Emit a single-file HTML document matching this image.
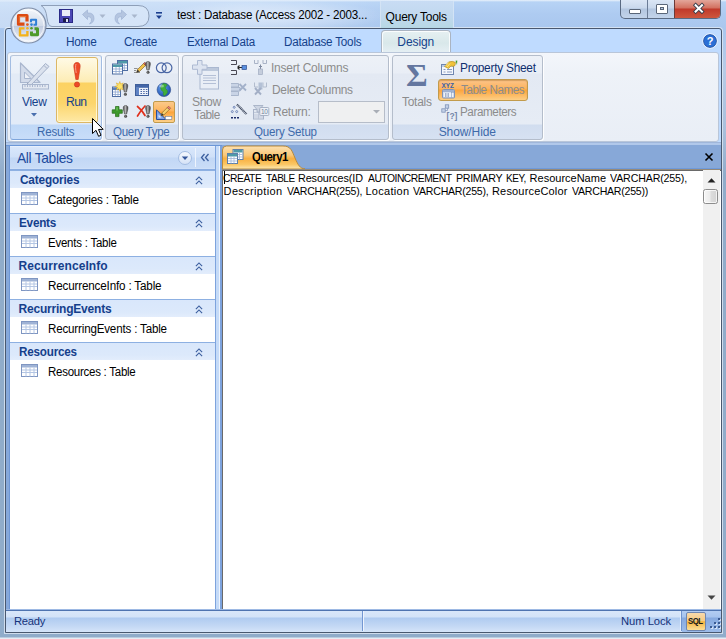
<!DOCTYPE html>
<html>
<head>
<meta charset="utf-8">
<title>test : Database (Access 2002 - 2003 file format) - Microsoft Access</title>
<style>
*{box-sizing:border-box;margin:0;padding:0}
html,body{width:726px;height:639px;overflow:hidden;background:#c3d6ee}
body{font-family:"Liberation Sans",sans-serif;font-size:12px;color:#15428b;position:relative}
.a{position:absolute}
.t{position:absolute;white-space:nowrap;line-height:14px}
#frame{left:0;top:0;width:726px;height:639px;background:linear-gradient(180deg,#eaf2fb 0,#b7d3f5 2px,#aecbf1 14px,#a9c7ee 29px,#b7cbe6 70px,#a9c0dc 130px,#90acca 175px,#90acca 637px,#e6ecf4 638px)}
#inner{left:5px;top:28px;width:717px;height:605px;background:#bfdbff;border:1px solid #49586f;border-radius:3px 3px 0 0;box-shadow:0 0 0 1px rgba(222,232,244,.8)}
/* ribbon */
#ribbon{left:7px;top:52px;width:712px;height:90px;border:1px solid #b9c6d9;border-radius:3px;background:linear-gradient(180deg,#f3f6fb 0,#eef2f8 20px,#e9eef6 100%)}
.grp{position:absolute;top:55px;height:85px;border:1px solid #b4bdcb;border-radius:3px;background:linear-gradient(180deg,#edf1f7 0,#e9eef6 17px,#e3e9f3 18px,#e6ecf5 68px,#d1ddef 69px,#d6e1f2 100%);box-shadow:1px 1px 0 rgba(255,255,255,.9)}
.grp .lbl{position:absolute;left:0;right:0;bottom:0;height:15px;text-align:center;color:#3e6aaa;font-size:12px;line-height:14px}
.tab{position:absolute;top:35px;font-size:12px;color:#15428b;line-height:14px;white-space:nowrap}
/* nav */
#nav{left:9px;top:146px;width:206px;height:463px;background:#fff;border-left:1px solid #6f97d6}
.nh{position:absolute;left:0;width:205px;height:18px;border-top:1px solid #8db0e2;background:linear-gradient(180deg,#d9e7fb 0,#dce9fb 12px,#e3edfc 100%);font-weight:bold;color:#153f8c}
.nh span{position:absolute;left:9px;top:1px;font-size:12px;line-height:14px;white-space:nowrap}
.dl{color:#000;font-size:11px;line-height:13px}
.ni{position:absolute;left:38px;color:#000;font-size:12px;white-space:nowrap}
/* doc */
#doc{left:222px;top:145px;width:499px;height:464px;background:#fff}
#status{left:6px;top:611px;width:715px;height:21px;background:linear-gradient(180deg,#d9e7fa 0,#d3e3f8 6px,#afcbf0 7px,#c3d8f4 15px,#d5e4f9 100%)}
</style>
<style id="fit">
#ttl{letter-spacing:-0.19px;margin-left:1.3px;margin-top:-0.5px;transform:scaleX(0.966);transform-origin:0 50%}
#qt{letter-spacing:-0.24px;margin-left:-1.4px;margin-top:0.5px;transform:scaleX(1.000);transform-origin:0 50%}
#tb1{letter-spacing:-0.27px;margin-left:-0.5px;margin-top:0.2px;transform:scaleX(0.985);transform-origin:0 50%}
#tb2{letter-spacing:-0.33px;margin-left:-0.3px;margin-top:0.2px;transform:scaleX(0.966);transform-origin:0 50%}
#tb3{letter-spacing:-0.16px;margin-left:-0.1px;margin-top:0.2px;transform:scaleX(0.965);transform-origin:0 50%}
#tb4{letter-spacing:-0.21px;margin-left:-0.1px;margin-top:0.2px;transform:scaleX(0.973);transform-origin:0 50%}
#tb5{letter-spacing:-0.08px;margin-left:-0.7px;margin-top:0.2px;transform:scaleX(1.000);transform-origin:0 50%}
#vw{letter-spacing:-0.28px;margin-left:0.4px;margin-top:0.1px;transform:scaleX(0.955);transform-origin:0 50%}
#rn{letter-spacing:-0.62px;margin-left:0.0px;margin-top:0.1px;transform:scaleX(0.973);transform-origin:0 50%}
#lb1{letter-spacing:-0.17px;margin-left:1.0px;margin-top:1.0px;transform:scaleX(0.961);transform-origin:0 50%}
#lb2{letter-spacing:-0.32px;margin-left:0.6px;margin-top:1.0px;transform:scaleX(0.963);transform-origin:0 50%}
#lb3{letter-spacing:-0.19px;margin-left:1.3px;margin-top:1.0px;transform:scaleX(0.963);transform-origin:0 50%}
#lb4{letter-spacing:-0.08px;margin-left:-0.4px;margin-top:1.0px;transform:scaleX(1.000);transform-origin:0 50%}
#sh1{letter-spacing:-0.41px;margin-left:-0.2px;margin-top:0.0px;transform:scaleX(0.973);transform-origin:0 50%}
#sh2{letter-spacing:-0.53px;margin-left:1.7px;margin-top:-0.2px;transform:scaleX(0.947);transform-origin:0 50%}
#ic{letter-spacing:-0.24px;margin-left:-0.6px;margin-top:0.0px;transform:scaleX(0.957);transform-origin:0 50%}
#dc{letter-spacing:-0.29px;margin-left:-0.4px;margin-top:0.0px;transform:scaleX(0.952);transform-origin:0 50%}
#rt{letter-spacing:-0.28px;margin-left:-0.2px;margin-top:0.0px;transform:scaleX(0.963);transform-origin:0 50%}
#tt{letter-spacing:-0.29px;margin-left:0.5px;margin-top:0.0px;transform:scaleX(0.957);transform-origin:0 50%}
#ps{letter-spacing:-0.27px;margin-left:-0.5px;margin-top:0.1px;transform:scaleX(0.952);transform-origin:0 50%}
#tn{letter-spacing:-0.47px;margin-left:0.5px;margin-top:0.0px;transform:scaleX(0.931);transform-origin:0 50%}
#pm{letter-spacing:-0.45px;margin-left:-0.5px;margin-top:0.0px;transform:scaleX(0.935);transform-origin:0 50%}
#at{letter-spacing:-0.33px;margin-left:1.5px;margin-top:-0.2px;transform:scaleX(0.950);transform-origin:0 50%}
#g0{letter-spacing:-0.16px;margin-left:0.5px;margin-top:0.5px;transform:scaleX(0.982);transform-origin:0 50%}
#g1{letter-spacing:-0.25px;margin-left:-0.5px;margin-top:0.5px;transform:scaleX(0.979);transform-origin:0 50%}
#g2{letter-spacing:0.09px;margin-left:-0.5px;margin-top:0.5px;transform:scaleX(1.000);transform-origin:0 50%}
#g3{letter-spacing:-0.21px;margin-left:-0.5px;margin-top:0.5px;transform:scaleX(1.000);transform-origin:0 50%}
#g4{letter-spacing:-0.21px;margin-left:-0.5px;margin-top:0.5px;transform:scaleX(0.972);transform-origin:0 50%}
#n0{letter-spacing:-0.18px;margin-left:-0.1px;margin-top:-4.4px;transform:scaleX(0.973);transform-origin:0 50%}
#n1{letter-spacing:-0.23px;margin-left:-0.1px;margin-top:-4.4px;transform:scaleX(0.956);transform-origin:0 50%}
#n2{letter-spacing:-0.18px;margin-left:-0.1px;margin-top:-4.4px;transform:scaleX(0.973);transform-origin:0 50%}
#n3{letter-spacing:-0.18px;margin-left:-0.1px;margin-top:-4.4px;transform:scaleX(0.966);transform-origin:0 50%}
#n4{letter-spacing:-0.27px;margin-left:-0.1px;margin-top:-4.4px;transform:scaleX(0.959);transform-origin:0 50%}
#q1{letter-spacing:-0.67px;margin-left:0.5px;margin-top:0.0px;transform:scaleX(0.954);transform-origin:0 50%}
#a0{letter-spacing:-0.47px;margin-left:-0.6px;margin-top:0.6px;transform:scaleX(0.937);transform-origin:0 50%}
#a1{letter-spacing:-0.49px;margin-left:42.3px;margin-top:0.6px;transform:scaleX(0.909);transform-origin:0 50%}
#a2{letter-spacing:-0.09px;margin-left:74.3px;margin-top:0.6px;transform:scaleX(0.981);transform-origin:0 50%}
#a3{letter-spacing:-0.52px;margin-left:143.8px;margin-top:0.6px;transform:scaleX(0.938);transform-origin:0 50%}
#a4{letter-spacing:-0.34px;margin-left:231.5px;margin-top:0.6px;transform:scaleX(0.974);transform-origin:0 50%}
#a5{letter-spacing:-0.51px;margin-left:282.0px;margin-top:0.6px;transform:scaleX(0.912);transform-origin:0 50%}
#a6{letter-spacing:0.00px;margin-left:305.6px;margin-top:0.6px;transform:scaleX(1.000);transform-origin:0 50%}
#a7{letter-spacing:-0.17px;margin-left:385.7px;margin-top:0.6px;transform:scaleX(0.969);transform-origin:0 50%}
#b0{letter-spacing:0.34px;margin-left:-0.4px;margin-top:0.6px;transform:scaleX(1.000);transform-origin:0 50%}
#b1{letter-spacing:-0.24px;margin-left:63.1px;margin-top:0.6px;transform:scaleX(0.956);transform-origin:0 50%}
#b2{letter-spacing:0.29px;margin-left:141.4px;margin-top:0.6px;transform:scaleX(1.000);transform-origin:0 50%}
#b3{letter-spacing:-0.24px;margin-left:189.4px;margin-top:0.6px;transform:scaleX(0.960);transform-origin:0 50%}
#b4{letter-spacing:0.17px;margin-left:268.0px;margin-top:0.6px;transform:scaleX(1.000);transform-origin:0 50%}
#b5{letter-spacing:-0.26px;margin-left:347.7px;margin-top:0.6px;transform:scaleX(0.963);transform-origin:0 50%}
#sq{letter-spacing:-0.54px;margin-left:-1.0px;margin-top:0.3px;transform:scaleX(0.919);transform-origin:0 50%}
#rd{letter-spacing:-0.26px;margin-left:-0.5px;margin-top:-0.2px;transform:scaleX(0.976);transform-origin:0 50%}
#nl{letter-spacing:-0.06px;margin-left:-0.3px;margin-top:-0.2px;transform:scaleX(0.978);transform-origin:0 50%}
</style>
</head>
<body>
<div id="frame" class="a"></div>
<div id="inner" class="a"></div>

<!-- ===== title bar ===== -->
<div class="a" style="left:0;top:1px;width:400px;height:27px;background:linear-gradient(90deg,rgba(255,255,255,.35) 0,rgba(255,255,255,.28) 60%,rgba(255,255,255,0) 100%)"></div>
<div class="a" style="left:160px;top:1px;width:225px;height:27px;background:radial-gradient(ellipse at 50% 55%,rgba(255,255,255,.45) 0,rgba(255,255,255,.2) 45%,rgba(255,255,255,0) 72%)"></div>
<div class="a" id="ctx" style="left:380px;top:1px;width:74px;height:27px;background:linear-gradient(180deg,#c8dcf4 0,#c0d8ee 60%,#b7d8e4 100%);border-left:1px solid #d3e3f5;border-right:1px solid #d3e3f5"></div>
<div class="t" style="left:176px;top:8px;color:#000;font-size:12px" id="ttl">test : Database (Access 2002 - 2003...</div>
<div class="t" style="left:387px;top:9px;color:#000;font-size:12px" id="qt">Query Tools</div>
<!-- QAT pill -->
<svg class="a" style="left:40px;top:3px" width="125" height="26" viewBox="0 0 125 26">
 <path d="M3 2.5 H98 Q109 2.5 109 13 Q109 23.5 98 23.5 H12 Q8 23.5 7 15 Q6 5 1 2.5Z" fill="rgba(225,236,250,.55)" stroke="#8e9fb8" stroke-width="1"/>
 <!-- save -->
 <rect x="19.5" y="6.5" width="13" height="13" fill="#4b47b5" stroke="#2a2a86"/>
 <rect x="22" y="7" width="8" height="6" fill="#e9ecf7"/>
 <rect x="23" y="15" width="6" height="4" fill="#1c1c4a"/>
 <rect x="26" y="16" width="2" height="3" fill="#dfe3f2"/>
 <!-- undo -->
 <path d="M42.500 11.500 l5 -4.500 v3 q6.500 -.5 6.500 5.500 q0 4 -4.500 5.500 q2.500 -2.500 2 -5 q-.5 -2.500 -4 -2.500 v3z" fill="#b4c5e0" stroke="#9fb3d4" stroke-width=".7"/>
 <path d="M59.500 11.500 h6 l-3 3.500z" fill="#a9b7cd"/>
 <!-- redo -->
 <path d="M86.500 11.500 l-5 -4.500 v3 q-6.500 -.5 -6.500 5.500 q0 4 4.500 5.500 q-2.500 -2.500 -2 -5 q.5 -2.500 4 -2.500 v3z" fill="#b4c5e0" stroke="#9fb3d4" stroke-width=".7"/>
 <path d="M91.500 11.500 h6 l-3 3.500z" fill="#a9b7cd"/>
 <!-- customise -->
 <rect x="116" y="9" width="6" height="1.6" fill="#1c3f8f"/>
 <path d="M116 12.5 h6 l-3 3.5z" fill="#1c3f8f"/>
</svg>
<!-- window buttons -->
<div class="a" style="left:620px;top:0;width:101px;height:19px;border:1px solid #5a6a82;border-top:0;border-radius:0 0 5px 5px;overflow:hidden;background:linear-gradient(180deg,#dbe6f5 0,#c9d8ec 8px,#b3c6e0 9px,#c3d4ea 100%)">
 <div class="a" style="left:26px;top:0;width:1px;height:19px;background:#6b7c96"></div>
 <div class="a" style="left:53px;top:0;width:47px;height:19px;border-left:1px solid #6b3a38;background:linear-gradient(180deg,#e3a69a 0,#d2705f 8px,#c0392a 9px,#cf5a3f 100%)"></div>
 <div class="a" style="left:8px;top:9px;width:12px;height:5px;background:#fff;border:1px solid #5a6678;border-radius:1px"></div>
 <div class="a" style="left:35px;top:4px;width:12px;height:10px;background:#fff;border:1px solid #5a6678;border-radius:1px"><div style="position:absolute;left:3px;top:2px;width:4px;height:3px;background:#b9c9df;border:1px solid #5a6678"></div></div>
 <svg class="a" style="left:70px;top:2px" width="16" height="13" viewBox="0 0 16 13"><path d="M4.600 3.200 L11 9.600 M11 3.200 L4.600 9.600" stroke="#3a3f4c" stroke-width="3.800" stroke-linecap="square"/><path d="M4.600 3.200 L11 9.600 M11 3.200 L4.600 9.600" stroke="#fff" stroke-width="2" stroke-linecap="square"/></svg>
</div>
<!-- office orb -->
<svg class="a" style="left:9px;top:6px" width="40" height="40" viewBox="0 0 40 40">
 <defs>
  <radialGradient id="og" cx="50%" cy="35%" r="65%"><stop offset="0" stop-color="#ffffff"/><stop offset=".6" stop-color="#e4eaf3"/><stop offset="1" stop-color="#aebbd0"/></radialGradient>
  <linearGradient id="ol" x1="0" y1="0" x2="0" y2="1"><stop offset="0" stop-color="#f4f7fb"/><stop offset=".5" stop-color="#d3dcea"/><stop offset=".52" stop-color="#c0cbe0"/><stop offset="1" stop-color="#f2f5fa"/></linearGradient>
 </defs>
 <circle cx="19.5" cy="19.5" r="17.5" fill="url(#ol)" stroke="#7f8ea8" stroke-width="1.2"/>
 <circle cx="19.5" cy="19.5" r="15.5" fill="none" stroke="#fff" stroke-opacity=".7"/>
 <g fill="none" stroke-linejoin="round" stroke-linecap="butt">
  <path d="M18 15.500 V9.700 H9.500 V18.200 H15.500" stroke="#dc4a12" stroke-width="3.200"/>
  <path d="M17.200 10.500 H10.300 V17" stroke="#f08a4a" stroke-width=".9" stroke-opacity=".8"/>
  <path d="M22 16.300 V13.800 H27.100 V18.800 H24.500" stroke="#2f7fd6" stroke-width="2"/>
  <path d="M15.500 22.400 H11 V29.400 H18.400 V25" stroke="#f3b21b" stroke-width="2.400"/>
  <path d="M25.500 22.700 H28.500 V28.700 H22.500 V25.500" stroke="#4e9a2a" stroke-width="3"/>
 </g>
 <circle cx="18.400" cy="18.600" r="1.400" fill="#e85a1c"/><circle cx="22.500" cy="18.600" r="1.300" fill="#2f7fd6"/>
 <circle cx="18.400" cy="22.300" r="1.300" fill="#f3b21b"/><circle cx="22.500" cy="22.300" r="1.300" fill="#4e9a2a"/>
</svg>
<!-- ===== tabs ===== -->
<div class="a" style="left:381px;top:30px;width:70px;height:23px;border:1px solid #aab4c2;border-bottom:0;border-radius:4px 4px 0 0;background:linear-gradient(180deg,#e6f0f2 0,#d9e8ea 55%,#e6eff4 100%);box-shadow:inset 1px 1px 0 rgba(255,255,255,.8),inset -1px 0 0 rgba(255,255,255,.8)"></div>
<div class="tab" style="left:66px" id="tb1">Home</div>
<div class="tab" style="left:124px" id="tb2">Create</div>
<div class="tab" style="left:187px" id="tb3">External Data</div>
<div class="tab" style="left:284px" id="tb4">Database Tools</div>
<div class="tab" style="left:398px" id="tb5">Design</div>
<!-- help -->
<svg class="a" style="left:702px;top:33px" width="16" height="16" viewBox="0 0 16 16">
 <circle cx="8" cy="8" r="6.500" fill="#2a6fd6" stroke="#1b4a9c"/>
 <circle cx="8" cy="8" r="7.300" fill="none" stroke="#fff" stroke-opacity=".8" stroke-width=".8"/>
 <text x="8" y="12" font-size="11" font-weight="bold" text-anchor="middle" fill="#fff" font-family="Liberation Sans, sans-serif">?</text>
</svg>

<div id="ribbon" class="a"></div>
<div class="a" style="left:6px;top:142px;width:715px;height:3px;background:linear-gradient(180deg,#9fb6da 0,#9fb6da 1px,#b1c8ea 1px,#b1c8ea 3px)"></div>
<div class="a" style="left:6px;top:145px;width:216px;height:1px;background:#6b97d8"></div>
<!-- ===== Results group ===== -->
<div class="grp" style="left:10px;width:92px;border-color:#b9c6da #a3bde2 #7fa6dc #a3bde2;background:linear-gradient(180deg,#eef3fa 0,#eaf0f8 17px,#e3ebf6 18px,#e2ebf8 68px,#bfd8f7 69px,#c8ddf9 100%)"><div class="lbl"><span id="lb1" style="display:inline-block;white-space:nowrap">Results</span></div></div>
<svg class="a" style="left:16px;top:58px" width="38" height="36" viewBox="16 58 38 36">
 <path d="M20.500 63 V82.500 H40Z" fill="#d3dbea" stroke="#a9b6ce" stroke-width="1.200" stroke-linejoin="round"/>
 <path d="M24.500 72 V78.500 H31Z" fill="#eef1f7" stroke="#a9b6ce" stroke-width="1"/>
 <path d="M27.500 83.500 L45.500 63.500 L49 66.500 L31 85 L27 85.500Z" fill="#dbe2ee" stroke="#a3b0c8" stroke-width="1"/>
 <path d="M44 65.500 l3 3" stroke="#a3b0c8" stroke-width="1"/>
 <path d="M27 85.500 l.6 -2.200 l1.800 1.700z" fill="#6a768c"/>
 <rect x="22.500" y="84.500" width="26" height="4.500" fill="#e4e9f2" stroke="#a9b6ce"/>
 <path d="M25 85 v2 M27.500 85 v2 M30 85 v2 M32.500 85 v2 M35 85 v2 M37.500 85 v2 M40 85 v2 M42.500 85 v2 M45 85 v2" stroke="#a9b6ce" stroke-width="1"/>
</svg>
<div class="t" style="left:22px;top:95px;font-size:12.500px" id="vw">View</div>
<svg class="a" style="left:31px;top:113px" width="6" height="4"><path d="M0 0 h6 l-3 3.500z" fill="#4a6fae"/></svg>
<div class="a" style="left:56px;top:57px;width:42px;height:66px;border:1px solid #dcb765;border-radius:3px;background:linear-gradient(180deg,#fffae6 0,#fdecb4 24px,#fcd263 25px,#fcd56b 45px,#fee9a6 100%);box-shadow:inset 0 0 0 1px rgba(255,250,225,.8)"></div>
<svg class="a" style="left:71px;top:61px" width="12" height="28" viewBox="0 0 12 28">
 <path d="M6 1.500 C9 1.500 9.500 4 9 7 L7.200 18.500 H4.800 L3 7 C2.500 4 3 1.500 6 1.500Z" fill="#ee4a26" stroke="#c8381c" stroke-width=".6"/>
 <circle cx="6" cy="23.500" r="2.600" fill="#ee4a26" stroke="#c3301c" stroke-width=".6"/>
 <path d="M5 3 C4.300 5 4.500 8 5.200 12" stroke="#f9a08c" stroke-width="1" fill="none"/>
</svg>
<div class="t" style="left:66px;top:95px;font-size:12.500px" id="rn">Run</div>
<!-- ===== Query Type group ===== -->
<div class="grp" style="left:105px;width:74px"><div class="lbl"><span id="lb2" style="display:inline-block;white-space:nowrap">Query Type</span></div></div>
<div class="a" style="left:153px;top:101px;width:22px;height:22px;border:1px solid #c29b4c;border-radius:2px;background:linear-gradient(180deg,#fbc98a 0,#fdb45c 45%,#fca33a 50%,#fdd089 100%)"></div>
<svg class="a" style="left:100px;top:50px" width="90" height="80" viewBox="100 50 90 80" id="qicons">
<defs><linearGradient id="pg" x1="0" y1="0" x2="1" y2="0"><stop offset="0" stop-color="#3a3a3a"/><stop offset=".45" stop-color="#b8b8b8"/><stop offset="1" stop-color="#2e2e2e"/></linearGradient></defs>
<rect x="117.5" y="60.5" width="10" height="10" fill="#fff" stroke="#4f6ea3"/><rect x="118" y="61" width="9" height="2.500" fill="#4f9aa8"/><path d="M118 65.5 h9 M118 68 h9 M121.0 63.5 v6.5 M124.3 63.5 v6.5" stroke="#8aa4cf" stroke-width=".8"/><rect x="112.5" y="64.0" width="10" height="10" fill="#fff" stroke="#4f6ea3"/><rect x="113" y="64.5" width="9" height="2.500" fill="#4f9aa8"/><path d="M113 69.0 h9 M113 71.5 h9 M116.0 67.0 v6.5 M119.3 67.0 v6.5" stroke="#8aa4cf" stroke-width=".8"/>
<path d="M137.500 69.500 l6 -6 l2 2 l-6 6 l-2.800 .8z" fill="#f0c04a" stroke="#7a5a1a" stroke-width=".6"/><path d="M143.500 63.500 l1.200 -1.200 l2 2 l-1.200 1.200z" fill="#d86a5a" stroke="#7a3a2a" stroke-width=".5"/><path d="M136.700 72.300 l.8 -2.800 l2 2z" fill="#333"/><path d="M134.500 68.500 h1 M134.500 70.500 h1 M134.500 72.500 h1 M136.500 72.500 h1 M138.500 72.500 h1 M136.500 68.500 h.8" stroke="#333" stroke-width="1"/><path d="M148 61.5 c2.200 0 2.700 1.600 2.200 3.800 l-1.100 4.700 h-2.200 l-1.100 -4.700 c-.5 -2.200 0 -3.800 2.200 -3.800z" fill="url(#pg)" stroke="#3c3c3c" stroke-width=".5"/><circle cx="148" cy="72.3" r="1.500" fill="#4a4a4a"/><circle cx="147.7" cy="72.0" r=".6" fill="#aaa"/>
<circle cx="161.300" cy="67.800" r="4.900" fill="#eef2fa" fill-opacity=".6" stroke="#4a66a4" stroke-width="1.200"/><circle cx="167" cy="67.800" r="4.900" fill="none" stroke="#4a66a4" stroke-width="1.200"/>
<rect x="112.5" y="87.0" width="8" height="9.5" fill="#fff" stroke="#4f6ea3"/><rect x="113" y="87.5" width="7" height="2.500" fill="#5b7fba"/><path d="M113 92.0 h7 M113 94.5 h7 M115.3 90.0 v6.0 M118.0 90.0 v6.0" stroke="#8aa4cf" stroke-width=".8"/><path d="M119.800 81.500 l.9 2.600 l2.600 -1.200 l-1.200 2.600 l2.600 .9 l-2.600 .9 l1.200 2.600 l-2.600 -1.200 l-.9 2.600 l-.9 -2.600 l-2.600 1.200 l1.200 -2.600 l-2.600 -.9 l2.600 -.9 l-1.200 -2.600 l2.600 1.200z" fill="#fde26a" stroke="#d8a21a" stroke-width=".5"/><path d="M125.4 83.5 c2.200 0 2.700 1.600 2.200 3.800 l-1.100 4.700 h-2.200 l-1.100 -4.700 c-.5 -2.200 0 -3.800 2.200 -3.800z" fill="url(#pg)" stroke="#3c3c3c" stroke-width=".5"/><circle cx="125.4" cy="94.3" r="1.500" fill="#4a4a4a"/><circle cx="125.10000000000001" cy="94.0" r=".6" fill="#aaa"/>
<rect x="135.500" y="84.500" width="13" height="11" fill="#eef2fa" stroke="#3f5f9a"/><rect x="136" y="85" width="12" height="2.800" fill="#4466a8"/><rect x="136" y="87.500" width="3" height="7.500" fill="#5f83c4"/><path d="M140.500 89.500 h1.500 M143.200 89.500 h1.500 M145.900 89.500 h1.500 M140.500 91.500 h1.500 M143.200 91.500 h1.500 M145.900 91.500 h1.500 M140.500 93.500 h1.500 M143.200 93.500 h1.500 M145.900 93.500 h1.500" stroke="#4a66a4" stroke-width="1"/>
<defs><radialGradient id="gg" cx="40%" cy="35%" r="65%"><stop offset="0" stop-color="#6aa6f0"/><stop offset="1" stop-color="#1f4fb0"/></radialGradient></defs><circle cx="163.900" cy="89.800" r="6.800" fill="url(#gg)" stroke="#2a4a8a" stroke-width=".6"/><path d="M163 83.500 q3 -.5 4.500 1.500 q-2.500 1.500 -2 3.500 q2.500 1.500 2 4 q-1 2.500 -3.500 3.500 q-1.500 -2 -.5 -4 q-3 -1.500 -3 -4 q.5 -2.500 2.500 -4.500z" fill="#3fae3a" stroke="#2a7a2a" stroke-width=".4"/><ellipse cx="161.500" cy="86" rx="2.500" ry="1.500" fill="#fff" fill-opacity=".4"/>
<path d="M115.500 106.500 h3.500 v3.300 h3.300 v3.500 h-3.300 v3.300 h-3.500 v-3.300 h-3.300 v-3.500 h3.300z" fill="#3e9a2c" stroke="#256a17" stroke-width=".7"/><path d="M116.300 107.300 h1.500 v3.300 h-1.500z" fill="#7fd06a" fill-opacity=".7"/><path d="M125.6 105.5 c2.200 0 2.700 1.600 2.200 3.800 l-1.100 4.700 h-2.200 l-1.100 -4.700 c-.5 -2.200 0 -3.800 2.200 -3.800z" fill="url(#pg)" stroke="#3c3c3c" stroke-width=".5"/><circle cx="125.6" cy="116.3" r="1.500" fill="#4a4a4a"/><circle cx="125.3" cy="116.0" r=".6" fill="#aaa"/>
<path d="M137.500 106.500 q4 3 7.500 9 M145 106 q-4 4 -7.500 10" stroke="#e0301c" stroke-width="1.700" stroke-linecap="round" fill="none"/><path d="M148 105.5 c2.200 0 2.700 1.600 2.200 3.800 l-1.100 4.700 h-2.200 l-1.100 -4.700 c-.5 -2.200 0 -3.800 2.200 -3.800z" fill="url(#pg)" stroke="#3c3c3c" stroke-width=".5"/><circle cx="148" cy="116.3" r="1.500" fill="#4a4a4a"/><circle cx="147.7" cy="116.0" r=".6" fill="#aaa"/>
<path d="M156.500 109.800 V119.500 H166Z" fill="#7fa6ea" stroke="#2a4f9a" stroke-width="1"/><path d="M158.500 114.500 v3 h3z" fill="#dbe6fa"/><path d="M161.800 113 l5.500 -5.500 l2 2 l-5.500 5.500 l-2.700 .7z" fill="#f6d070" stroke="#7a5a1a" stroke-width=".6"/><path d="M167.300 107.500 l1.300 -1.300 l2 2 l-1.300 1.300z" fill="#e88080" stroke="#7a3a2a" stroke-width=".5"/><path d="M161.100 115.700 l.7 -2.700 l2 2z" fill="#333"/><rect x="165.300" y="116.300" width="6.500" height="3" fill="#fff" stroke="#6a7a9a" stroke-width=".6"/>
</svg>
<!-- ===== Query Setup group ===== -->
<div class="grp" style="left:182px;width:207px"><div class="lbl"><span id="lb3" style="display:inline-block;white-space:nowrap">Query Setup</span></div></div>
<svg class="a" style="left:188px;top:56px" width="36" height="38" viewBox="188 56 36 38">
 <rect x="200" y="67.500" width="18.500" height="21.500" fill="#e9eef6" stroke="#aab8d0"/>
 <rect x="200.500" y="68" width="17.500" height="3" fill="#bcc8db"/>
 <path d="M203 75.500 h13 M203 78 h13 M203 80.500 h13 M203 83.500 h13" stroke="#b4c0d6" stroke-width="1"/>
 <path d="M192.500 65 h5 v-4.500 h4.500 v4.500 h5 v4.300 h-5 v5 h-4.500 v-5 h-5z" fill="#dde4f0" stroke="#adbad2"/>
</svg>
<div class="t" style="left:192px;top:95px;font-size:12.500px;color:#8c8c8c" id="sh1">Show</div>
<div class="t" style="left:192px;top:108px;font-size:12.500px;color:#8c8c8c" id="sh2">Table</div>
<svg class="a" style="left:226px;top:54px" width="48" height="72" viewBox="226 54 48 72">
 <!-- insert rows -->
 <path d="M231 60.500 h5.500 v4 h-5.500 M231 70.500 h5.500 v4 h-5.500" fill="none" stroke="#4a4a55" stroke-width="1"/>
 <path d="M237.500 67.500 h4.500 M237.500 67.500 l2 -2 M237.500 67.500 l2 2" stroke="#222" stroke-width="1.100" fill="none"/>
 <rect x="242" y="65.500" width="4.500" height="4" fill="#5a90e0" stroke="#2f4f8f" stroke-width=".7"/>
 <!-- insert columns (disabled) -->
 <path d="M254.500 60 v3.500 h3.500 v-3.500 M263 60 v3.500 h3.500 v-3.500" fill="none" stroke="#a9b3c6" stroke-width="1"/>
 <path d="M260.500 64.500 v4.500 M259 66.500 h3" stroke="#7f8aa0" stroke-width="1"/>
 <rect x="258.500" y="69" width="4" height="5.500" fill="#c5cddc" stroke="#a0abc0" stroke-width=".7"/>
 <!-- delete rows (disabled) -->
 <path d="M231 83.500 h7.500 v3.500 h-7.500 M231 87.500 h9 v3.500 h-9 M231 91.500 h7.500 v4 h-7.500" fill="#c9d4e6" stroke="#a9b6cc" stroke-width="1"/>
 <path d="M239.500 84 l6.500 6.500 M246 84 l-6.500 6.500" stroke="#a3b1ca" stroke-width="1.800"/>
 <!-- delete columns (disabled) -->
 <path d="M254.500 82.500 v4.500 h3.500 M263 82.500 v4.500 h3.500 v-4.500" fill="none" stroke="#b3bdce" stroke-width="1"/>
 <rect x="258.500" y="82.500" width="4" height="7" fill="#b4c1d6"/>
 <path d="M255 88 l6 6.500 M261 88 l-6 6.500" stroke="#a3afc6" stroke-width="1.900"/>
 <!-- builder -->
 <path d="M237 104.500 l9.500 9.500" stroke="#3c465c" stroke-width="2.200" stroke-dasharray="1 .6"/>
 <circle cx="234.200" cy="107.300" r="1" fill="none" stroke="#4a66a4" stroke-width=".7"/><circle cx="232.300" cy="111.600" r="1" fill="none" stroke="#4a66a4" stroke-width=".7"/><circle cx="236.700" cy="111.600" r="1" fill="none" stroke="#4a66a4" stroke-width=".7"/>
 <path d="M231 117.800 h2 M234 117.800 h2 M237 117.800 h2" stroke="#1f2f6a" stroke-width="1.600"/>
 <!-- return (disabled) -->
 <rect x="253.500" y="109.500" width="10" height="9.500" fill="#e1e7f0" stroke="#a8b3c8"/>
 <path d="M254 112.500 h9 M254 115 h9 M254 117 h9 M258.500 112 v7" stroke="#b9c3d5" stroke-width=".8"/>
 <path d="M253.500 105.500 h9.500 l-3.500 4 v2.500 h-2.500 v-2.500z" fill="#cdd5e3" stroke="#a0abc0" stroke-width=".8"/>
 <rect x="259.800" y="107.500" width="9" height="8" rx="1" fill="#edf1f7" stroke="#a0abc0" stroke-width=".9"/>
 <text x="264.300" y="114" font-size="6.500" text-anchor="middle" fill="#6f7f9a" font-family="Liberation Sans, sans-serif" letter-spacing="-.4">10</text>
</svg>
<div class="t" style="left:272px;top:61px;font-size:12.500px;color:#8c8c8c" id="ic">Insert Columns</div>
<div class="t" style="left:272px;top:83px;font-size:12.500px;color:#8c8c8c" id="dc">Delete Columns</div>
<div class="t" style="left:273px;top:105px;font-size:12.500px;color:#8c8c8c" id="rt">Return:</div>
<div class="a" style="left:318px;top:101px;width:67px;height:22px;border:1px solid #b6bdc9;background:#eff0f1"></div>
<svg class="a" style="left:373px;top:110px" width="7" height="4"><path d="M0 0 h7 l-3.500 3.500z" fill="#a9aeb6"/></svg>
<!-- ===== Show/Hide group ===== -->
<div class="grp" style="left:392px;width:151px"><div class="lbl"><span id="lb4" style="display:inline-block;white-space:nowrap">Show/Hide</span></div></div>
<div class="t" style="left:406px;top:57.500px;font-size:31px;line-height:36px;font-family:'Liberation Serif',serif;font-weight:bold;color:#6477a0;transform:scaleX(1.07);transform-origin:0 0" id="sg">&Sigma;</div>
<div class="t" style="left:401px;top:95px;font-size:12.500px;color:#8c8c8c" id="tt">Totals</div>
<svg class="a" style="left:440px;top:60px" width="18" height="16" viewBox="0 0 18 16">
 <rect x="1.500" y="4.500" width="12" height="10" fill="#f4f7fc" stroke="#6f86b0"/><rect x="2" y="5" width="11" height="2" fill="#b9cbe8"/>
 <path d="M3.500 9.500 h2 M7 9.500 h5 M3.500 12 h2 M7 12 h5" stroke="#8a9cc0" stroke-width="1"/>
 <path d="M4.500 6.500 l4 -4.500 q4 -1.500 7 .5 l-.5 3 q-2 1.500 -4 .5 l-2.500 2.500z" fill="#f0c23a" stroke="#a88a2a" stroke-width=".6"/>
 <path d="M5.500 6 l3 -3.500 M7 7 l3 -3.500" stroke="#fff3b0" stroke-width=".7"/>
 <path d="M15.500 .8 l1.800 -.3 l-.3 4.500z" fill="#3e9a2c"/>
</svg>
<div class="t" style="left:460px;top:61px;font-size:12.500px;color:#0f3070" id="ps">Property Sheet</div>
<div class="a" style="left:438px;top:79px;width:90px;height:22px;border:1px solid #c29b4c;border-radius:3px;background:linear-gradient(180deg,#fcc48a 0,#fdb35c 45%,#fca43c 50%,#fdcf86 100%);box-shadow:inset 0 1px 1px rgba(140,90,20,.35)"></div>
<svg class="a" style="left:440px;top:80px" width="18" height="20" viewBox="0 0 18 20">
 <text x="1.500" y="8" font-size="7" font-weight="bold" fill="#3a5fa8" font-family="Liberation Sans, sans-serif" textLength="12.500" lengthAdjust="spacingAndGlyphs">XYZ</text>
 <rect x="2.500" y="9.500" width="12" height="8.500" rx="1" fill="#d5deee" stroke="#8093b8"/><rect x="3" y="10" width="11" height="2" fill="#9fb0d0"/>
 <rect x="4" y="13" width="7" height="4" fill="#eef2f9"/><path d="M5 14 h1.500 M7.500 14 h1.500 M5 16 h1.500 M7.500 16 h1.500" stroke="#5f74a0" stroke-width="1"/>
 <rect x="11.500" y="12.500" width="2.500" height="5" fill="#eef2f9" stroke="#8093b8" stroke-width=".5"/>
</svg>
<div class="t" style="left:460px;top:83px;font-size:12.500px;color:#8c8c8c" id="tn">Table Names</div>
<svg class="a" style="left:441px;top:103px" width="18" height="18" viewBox="0 0 18 18">
 <path d="M3 7.500 h3.500 v-3" fill="none" stroke="#8a9cc0" stroke-width=".8"/>
 <rect x=".8" y="5.800" width="3.400" height="3.400" fill="#c5d2e8" stroke="#7f93b8" stroke-width=".8"/><rect x="4.300" y="1.800" width="3.400" height="3.400" fill="#c5d2e8" stroke="#7f93b8" stroke-width=".8"/>
 <text x="11" y="15.500" font-size="8.500" font-weight="bold" text-anchor="middle" fill="#7486aa" font-family="Liberation Sans, sans-serif">[?]</text>
</svg>
<div class="t" style="left:460px;top:105px;font-size:12.500px;color:#8c8c8c" id="pm">Parameters</div>
<!-- cursor -->
<svg class="a" style="left:91px;top:117px;z-index:50" width="14" height="21" viewBox="0 0 14 21">
 <path d="M1.500 1.500 L1.500 16.500 L5 13.300 L7.600 19.300 L10 18.200 L7.500 12.500 L12.200 12.300Z" fill="#fff" stroke="#000" stroke-width="1"/>
</svg>
<div class="a" style="left:6px;top:146px;width:4px;height:464px;background:#86a8da"></div>
<div id="nav" class="a">
 <div class="a" style="left:0;top:0;width:205px;height:25px;background:linear-gradient(180deg,#f4f8fe 0,#d9e7fb 1px,#cfe0f8 11px,#c2d7f5 12px,#c9dcf7 22px,#d5e4f9 23px,#8eb0e3 23px,#7da3dd 25px)"></div>
 <div class="t" style="left:5px;top:4px;font-size:14.500px;line-height:16px;color:#1d4a9c" id="at">All Tables</div>
 <svg class="a" style="left:167px;top:4px" width="16" height="16" viewBox="0 0 16 16"><defs><linearGradient id="dg" x1="0" y1="0" x2="0" y2="1"><stop offset="0" stop-color="#f6f9fe"/><stop offset="1" stop-color="#d3e1f6"/></linearGradient></defs><circle cx="8" cy="8" r="6.500" fill="url(#dg)" stroke="#a3bce2"/><path d="M4.800 6.500 h6.400 l-3.200 3.500z" fill="#34569a"/></svg>
 <div class="a" style="left:185px;top:2px;width:1px;height:19px;background:#eef4fd"></div>
 <svg class="a" style="left:190px;top:7px" width="10" height="10" viewBox="0 0 10 10"><path d="M4.500 1 L1.500 4.500 L4.500 8 M8.500 1 L5.500 4.500 L8.500 8" fill="none" stroke="#3c5f9f" stroke-width="1.300"/></svg>
 <div class="nh" style="top:24px"><span id="g0">Categories</span><svg class="a" style="left:185px;top:4.500px" width="8" height="9" viewBox="0 0 9 10"><path d="M1 4.500 L4.500 1 L8 4.500 M1 9 L4.500 5.500 L8 9" fill="none" stroke="#3c5f9f" stroke-width="1.300"/></svg></div>
 <svg class="a" style="left:11px;top:46px" width="18" height="13" viewBox="0 0 18 13"><rect x=".5" y=".5" width="16" height="12" fill="#fff" stroke="#7f96c2"/><rect x="1" y="1" width="15" height="2.500" fill="#9fb3d6"/><path d="M1 6 h15 M1 8.500 h15 M5 3.500 v9 M9 3.500 v9 M13 3.500 v9" stroke="#b4c6e4" stroke-width="1"/></svg>
 <div class="ni t" style="top:51px" id="n0">Categories : Table</div>
 <div class="nh" style="top:67px"><span id="g1">Events</span><svg class="a" style="left:185px;top:4.500px" width="8" height="9" viewBox="0 0 9 10"><path d="M1 4.500 L4.500 1 L8 4.500 M1 9 L4.500 5.500 L8 9" fill="none" stroke="#3c5f9f" stroke-width="1.300"/></svg></div>
 <svg class="a" style="left:11px;top:89px" width="18" height="13" viewBox="0 0 18 13"><rect x=".5" y=".5" width="16" height="12" fill="#fff" stroke="#7f96c2"/><rect x="1" y="1" width="15" height="2.500" fill="#9fb3d6"/><path d="M1 6 h15 M1 8.500 h15 M5 3.500 v9 M9 3.500 v9 M13 3.500 v9" stroke="#b4c6e4" stroke-width="1"/></svg>
 <div class="ni t" style="top:94px" id="n1">Events : Table</div>
 <div class="nh" style="top:110px"><span id="g2">RecurrenceInfo</span><svg class="a" style="left:185px;top:4.500px" width="8" height="9" viewBox="0 0 9 10"><path d="M1 4.500 L4.500 1 L8 4.500 M1 9 L4.500 5.500 L8 9" fill="none" stroke="#3c5f9f" stroke-width="1.300"/></svg></div>
 <svg class="a" style="left:11px;top:132px" width="18" height="13" viewBox="0 0 18 13"><rect x=".5" y=".5" width="16" height="12" fill="#fff" stroke="#7f96c2"/><rect x="1" y="1" width="15" height="2.500" fill="#9fb3d6"/><path d="M1 6 h15 M1 8.500 h15 M5 3.500 v9 M9 3.500 v9 M13 3.500 v9" stroke="#b4c6e4" stroke-width="1"/></svg>
 <div class="ni t" style="top:137px" id="n2">RecurrenceInfo : Table</div>
 <div class="nh" style="top:153px"><span id="g3">RecurringEvents</span><svg class="a" style="left:185px;top:4.500px" width="8" height="9" viewBox="0 0 9 10"><path d="M1 4.500 L4.500 1 L8 4.500 M1 9 L4.500 5.500 L8 9" fill="none" stroke="#3c5f9f" stroke-width="1.300"/></svg></div>
 <svg class="a" style="left:11px;top:175px" width="18" height="13" viewBox="0 0 18 13"><rect x=".5" y=".5" width="16" height="12" fill="#fff" stroke="#7f96c2"/><rect x="1" y="1" width="15" height="2.500" fill="#9fb3d6"/><path d="M1 6 h15 M1 8.500 h15 M5 3.500 v9 M9 3.500 v9 M13 3.500 v9" stroke="#b4c6e4" stroke-width="1"/></svg>
 <div class="ni t" style="top:180px" id="n3">RecurringEvents : Table</div>
 <div class="nh" style="top:196px"><span id="g4">Resources</span><svg class="a" style="left:185px;top:4.500px" width="8" height="9" viewBox="0 0 9 10"><path d="M1 4.500 L4.500 1 L8 4.500 M1 9 L4.500 5.500 L8 9" fill="none" stroke="#3c5f9f" stroke-width="1.300"/></svg></div>
 <svg class="a" style="left:11px;top:218px" width="18" height="13" viewBox="0 0 18 13"><rect x=".5" y=".5" width="16" height="12" fill="#fff" stroke="#7f96c2"/><rect x="1" y="1" width="15" height="2.500" fill="#9fb3d6"/><path d="M1 6 h15 M1 8.500 h15 M5 3.500 v9 M9 3.500 v9 M13 3.500 v9" stroke="#b4c6e4" stroke-width="1"/></svg>
 <div class="ni t" style="top:223px" id="n4">Resources : Table</div>
</div>
<div class="a" style="left:215px;top:146px;width:7px;height:464px;background:linear-gradient(90deg,#7da3dd 0,#7da3dd 1.300px,#c5dbf8 1.300px,#c5dbf8 4.300px,#eef4fd 4.300px,#eef4fd 5px,#7da3dd 5px,#7da3dd 7px)"></div>
<div id="doc" class="a">
 <div class="a" style="left:0;top:0;width:499px;height:24px;background:linear-gradient(180deg,#87a8d8 0,#87a8d8 23px,#6f9ada 23px)"></div>
 <svg class="a" style="left:0;top:0" width="90" height="24" viewBox="0 0 90 24">
  <defs><linearGradient id="tg" x1="0" y1="0" x2="0" y2="1"><stop offset="0" stop-color="#fce0b0"/><stop offset=".4" stop-color="#fac878"/><stop offset=".55" stop-color="#f8b042"/><stop offset=".8" stop-color="#fbc765"/><stop offset="1" stop-color="#fde9b4"/></linearGradient></defs>
  <path d="M0.500 24 V5 Q0.500 1 4.500 1 H61 C69 1 70 6 73 13 S78 23.500 83 24Z" fill="url(#tg)" stroke="#b98a3a"/>
  <g transform="translate(5,4)">
   <rect x="6" y=".5" width="10" height="10" fill="#fff" stroke="#5f7fa8"/><rect x="6.500" y="1" width="9" height="2.500" fill="#4f9aa8"/><path d="M6.500 5.500 h9 M6.500 8 h9 M9.500 3.500 v7 M12.500 3.500 v7" stroke="#9fb4d6" stroke-width=".8"/>
   <rect x=".5" y="4.500" width="10" height="10" fill="#fff" stroke="#5f7fa8"/><rect x="1" y="5" width="9" height="2.500" fill="#4f9aa8"/><path d="M1 9.500 h9 M1 12 h9 M4 7.500 v7 M7 7.500 v7" stroke="#9fb4d6" stroke-width=".8"/>
  </g>
 </svg>
 <div class="t" style="left:29px;top:5px;font-weight:bold;color:#000;font-size:12px" id="q1">Query1</div>
 <svg class="a" style="left:482px;top:7px" width="10" height="10" viewBox="0 0 10 10"><path d="M1.500 1.500 L8.500 8.500 M8.500 1.500 L1.500 8.500" stroke="#000" stroke-width="1.600"/></svg>
 <div class="a" style="left:0;top:24px;width:499px;height:440px;background:#fff;border-left:1px solid #6e6e6e;border-top:2px solid #6e6e6e;border-image:linear-gradient(180deg,#94897a 0,#94897a 1px,#6a6a6a 1px,#6a6a6a 100%) 2 0 0 1"></div>
 <div class="a" style="left:2px;top:26px;width:1px;height:13px;background:#000"></div>
 <div class="t dl" style="left:2px;top:26px" id="a0">CREATE</div>
 <div class="t dl" style="left:2px;top:26px" id="a1">TABLE</div>
 <div class="t dl" style="left:2px;top:26px" id="a2">Resources(ID</div>
 <div class="t dl" style="left:2px;top:26px" id="a3">AUTOINCREMENT</div>
 <div class="t dl" style="left:2px;top:26px" id="a4">PRIMARY</div>
 <div class="t dl" style="left:2px;top:26px" id="a5">KEY,</div>
 <div class="t dl" style="left:2px;top:26px" id="a6">ResourceName</div>
 <div class="t dl" style="left:2px;top:26px" id="a7">VARCHAR(255),</div>
 <div class="t dl" style="left:2px;top:39px" id="b0">Description</div>
 <div class="t dl" style="left:2px;top:39px" id="b1">VARCHAR(255),</div>
 <div class="t dl" style="left:2px;top:39px" id="b2">Location</div>
 <div class="t dl" style="left:2px;top:39px" id="b3">VARCHAR(255),</div>
 <div class="t dl" style="left:2px;top:39px" id="b4">ResourceColor</div>
 <div class="t dl" style="left:2px;top:39px" id="b5">VARCHAR(255))</div>
 <!-- scrollbar -->
 <div class="a" style="left:481px;top:25px;width:17px;height:439px;background:#f0f0f0"></div>
 <svg class="a" style="left:485px;top:33px" width="9" height="5" viewBox="0 0 9 5"><path d="M0.500 4.500 L4.500 0.300 L8.500 4.500z" fill="#222"/></svg>
 <div class="a" style="left:481px;top:44px;width:15px;height:15px;border:1px solid #8c8c8c;border-radius:2.500px;background:linear-gradient(90deg,#f6f6f6 0,#ebebeb 48%,#dcdcdc 52%,#d3d3d3 100%);box-shadow:inset 0 0 0 1px rgba(255,255,255,.7)"></div>
 <svg class="a" style="left:485px;top:450px" width="9" height="5" viewBox="0 0 9 5"><path d="M0.500 0.500 L4.500 4.700 L8.500 0.500z" fill="#444"/></svg>
</div>
<div class="a" style="left:6px;top:609px;width:715px;height:2px;background:linear-gradient(180deg,#9db9e4 0,#9db9e4 1px,#4f74b0 1px,#4f74b0 2px)"></div>
<div id="status" class="a">
 <div class="a" style="left:676px;top:0;width:39px;height:21px;background:linear-gradient(180deg,#b3cdf2 0,#a7c4ee 6px,#86a9df 7px,#9dbcea 100%)"></div>
 <div class="t" style="left:8px;top:3px;font-size:11.500px;color:#15327a" id="rd">Ready</div>
 <div class="a" style="left:356px;top:0px;width:1px;height:20px;background:#7397d2"></div>
 <div class="a" style="left:357px;top:0px;width:1px;height:20px;background:#eef4fd"></div>
 <div class="t" style="left:615px;top:3px;font-size:11.500px;color:#15327a" id="nl">Num Lock</div>
 <div class="a" style="left:674px;top:0px;width:1px;height:20px;background:#e4eefb"></div>
 <div class="a" style="left:675px;top:0px;width:1px;height:20px;background:#6f93cf"></div>
 <div class="a" style="left:680px;top:1px;width:20px;height:19px;border:1px solid #6f86b0;border-radius:2px;background:linear-gradient(180deg,#f7d9ac 0,#f6cb84 45%,#f2b23e 52%,#f9cd74 80%,#fcdf98 100%)"></div>
 <div class="t" style="left:683px;top:4px;font-size:8.500px;font-weight:bold;color:#1a1a1a;line-height:12px" id="sq">SQL</div>
 <svg class="a" style="left:703.500px;top:7px" width="12" height="12" viewBox="0 0 12 12"><g fill="#fff" fill-opacity=".6"><rect x="9" y="1" width="2" height="2"/><rect x="5" y="5" width="2" height="2"/><rect x="9" y="5" width="2" height="2"/><rect x="1" y="9" width="2" height="2"/><rect x="5" y="9" width="2" height="2"/><rect x="9" y="9" width="2" height="2"/></g><g fill="#3a5a92"><rect x="8" y="0" width="2" height="2"/><rect x="4" y="4" width="2" height="2"/><rect x="8" y="4" width="2" height="2"/><rect x="0" y="8" width="2" height="2"/><rect x="4" y="8" width="2" height="2"/><rect x="8" y="8" width="2" height="2"/></g></svg>
</div>
</body>
</html>
